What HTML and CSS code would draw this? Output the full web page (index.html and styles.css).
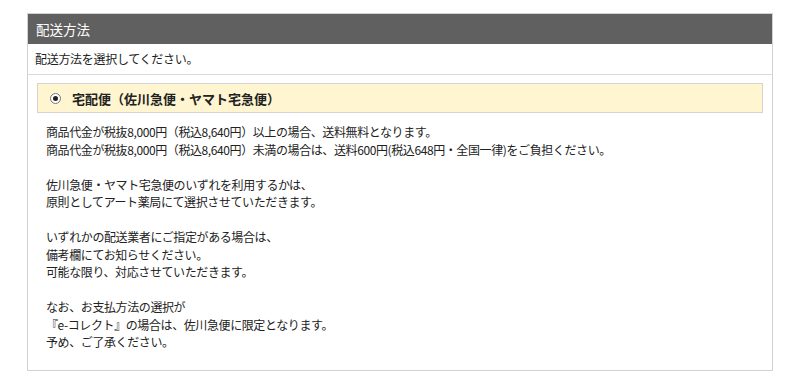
FILE: index.html
```html
<!DOCTYPE html>
<html lang="ja">

<head>
    <meta charset="UTF-8">
    <meta name="viewport" content="width=device-width, initial-scale=1.0">
    <title>配送方法</title>
    <link rel="stylesheet" href="styles.css">
</head>

<body>
    <div class="box">
        <h2 class="box-title">配送方法</h2>
        <div class="box-lead">配送方法を選択してください。</div>
        <div class="box-body">
            <label class="option">
                <span class="radio"></span>
                <span class="option-name">宅配便（佐川急便・ヤマト宅急便）</span>
            </label>
            <p class="note">
                商品代金が税抜8,000円（税込8,640円）以上の場合、送料無料となります。<br>
                商品代金が税抜8,000円（税込8,640円）未満の場合は、送料600円(税込648円・全国一律)をご負担ください。<br>
                <br>
                佐川急便・ヤマト宅急便のいずれを利用するかは、<br>
                原則としてアート薬局にて選択させていただきます。<br>
                <br>
                いずれかの配送業者にご指定がある場合は、<br>
                備考欄にてお知らせください。<br>
                可能な限り、対応させていただきます。<br>
                <br>
                なお、お支払方法の選択が<br>
                『e-コレクト』の場合は、佐川急便に限定となります。<br>
                予め、ご了承ください。
            </p>
        </div>
    </div>
</body>

</html>
```

FILE: styles.css
```css
body {
    margin: 0;
    padding: 13px 27px;
    font-family: "Noto Sans CJK JP", "Noto Sans", sans-serif;
    color: #222;
    background-color: #fff;
}

.box {
    border: 1px solid #d2d2d2;
}

.box-title {
    margin: 0;
    height: 30px;
    padding-left: 8px;
    line-height: 30px;
    font-size: 13.5px;
    font-weight: normal;
    color: #fff;
    background-color: #606060;
}

.box-lead {
    height: 30px;
    padding-left: 7px;
    line-height: 30px;
    font-size: 12px;
    letter-spacing: -0.3px;
    border-bottom: 1px solid #dcdcdc;
}

.box-body {
    padding: 8px 9px 19px;
}

/* 黄色い選択肢 */
.option {
    display: flex;
    align-items: center;
    height: 28px;
    padding-left: 12px;
    border: 1px solid #d4d4d4;
    background-color: #fff5d1;
}

.radio {
    display: flex;
    justify-content: center;
    align-items: center;
    width: 9px;
    height: 9px;
    border: 1px solid #777;
    border-radius: 50%;
    background-color: #fff;
}

.radio::after {
    content: '';
    width: 5px;
    height: 5px;
    border-radius: 50%;
    background-color: #222;
}

.option-name {
    margin-left: 11px;
    font-size: 13px;
    font-weight: bold;
}

.note {
    margin: 10px 0 0 9px;
    font-size: 12px;
    line-height: 17.5px;
    letter-spacing: -0.4px;
}
```
